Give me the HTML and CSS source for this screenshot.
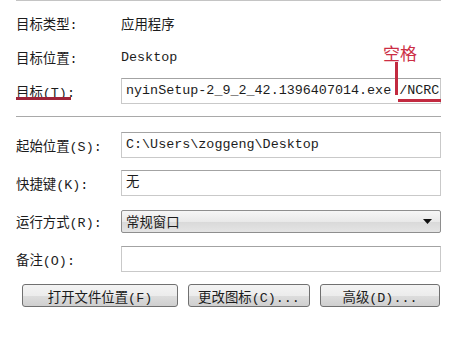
FILE: index.html
```html
<!DOCTYPE html>
<html lang="zh-CN">
<head>
  <meta charset="UTF-8">
  <title>快捷方式属性</title>
  <link rel="stylesheet" href="styles.css">
</head>
<body>
  <div class="panel">
    <section class="group top">
      <div class="row">
        <span class="label">目标类型:</span>
        <span class="value">应用程序</span>
      </div>
      <div class="row">
        <span class="label">目标位置:</span>
        <span class="value">Desktop</span>
      </div>
      <div class="row target">
        <span class="label">目标(T):</span>
        <div class="field">nyinSetup-2_9_2_42.1396407014.exe /NCRC</div>
        <!-- red annotations drawn over the screenshot -->
        <span class="mark mark-label"></span>
        <span class="mark-text">空格</span>
        <span class="mark mark-stem"></span>
        <span class="mark mark-arg"></span>
      </div>
    </section>
    <section class="group bottom">
      <div class="row">
        <span class="label">起始位置(S):</span>
        <div class="field">C:\Users\zoggeng\Desktop</div>
      </div>
      <div class="row">
        <span class="label">快捷键(K):</span>
        <div class="field">无</div>
      </div>
      <div class="row">
        <span class="label">运行方式(R):</span>
        <div class="select">
          <span>常规窗口</span>
          <svg width="9" height="5" viewBox="0 0 9 5"><path d="M0 0h9L4.5 5z" fill="#111"/></svg>
        </div>
      </div>
      <div class="row">
        <span class="label">备注(O):</span>
        <div class="field"></div>
      </div>
      <div class="buttons">
        <button class="btn wide">打开文件位置(F)</button>
        <button class="btn">更改图标(C)...</button>
        <button class="btn">高级(D)...</button>
      </div>
    </section>
  </div>
</body>
</html>
```

FILE: styles.css
```css
body {
  margin: 0;
  background: #fff;
  color: #1c1c1c;
  font-family: "Liberation Mono", "Noto Sans CJK SC", monospace;
  font-size: 13.4px;
}
.panel {
  margin-left: 16px;
  width: 425px;
}
.group {
  display: flex;
  flex-direction: column;
}
.top {
  border-top: 1px solid #c4c4c4;
  padding-top: 9px;
  gap: 8px;
  padding-bottom: 12px;
}
.bottom {
  border-top: 1px solid #a9a9a9;
  padding-top: 15px;
  gap: 12px;
}
.row {
  display: flex;
  align-items: center;
  height: 26px;
  position: relative;
}
.label {
  width: 105px;
  flex: none;
  white-space: nowrap;
}
.value {
  padding-left: 0;
}
.field {
  box-sizing: border-box;
  width: 320px;
  height: 26px;
  line-height: 24px;
  padding: 0 4px;
  border: 1px solid #c9c9c9;
  border-top-color: #a3a3a3;
  white-space: nowrap;
  overflow: hidden;
}
.select {
  box-sizing: border-box;
  width: 320px;
  height: 23px;
  padding: 0 8px 0 4px;
  border: 1px solid #8e8e8e;
  border-radius: 2px;
  background: linear-gradient(#f6f6f6, #e9e9e9 50%, #d9d9d9 51%, #e4e4e4);
  display: flex;
  align-items: center;
  justify-content: space-between;
}
.buttons {
  display: flex;
  gap: 10px;
  margin-left: 6px;
}
.btn {
  box-sizing: border-box;
  height: 23px;
  width: 122px;
  font: inherit;
  color: #1c1c1c;
  border: 1px solid #707070;
  border-radius: 3px;
  background: linear-gradient(#f3f3f3, #ececec 50%, #dddddd 51%, #cfcfcf);
  padding: 0;
}
.btn.wide {
  width: 156px;
}
.btn:last-child {
  width: 120px;
}
.mark {
  position: absolute;
  background: #c22a40;
}
.mark-label {
  left: 0;
  top: 19px;
  width: 55px;
  height: 3px;
  background: #9e2338;
}
.mark-stem {
  left: 379px;
  top: -16px;
  width: 3px;
  height: 33px;
}
.mark-arg {
  left: 382px;
  top: 21px;
  width: 43px;
  height: 3px;
}
.mark-text {
  position: absolute;
  left: 367px;
  top: -35px;
  color: #cc2e44;
  font-family: "Noto Sans CJK SC", sans-serif;
  font-size: 17px;
  line-height: 20px;
}
```
